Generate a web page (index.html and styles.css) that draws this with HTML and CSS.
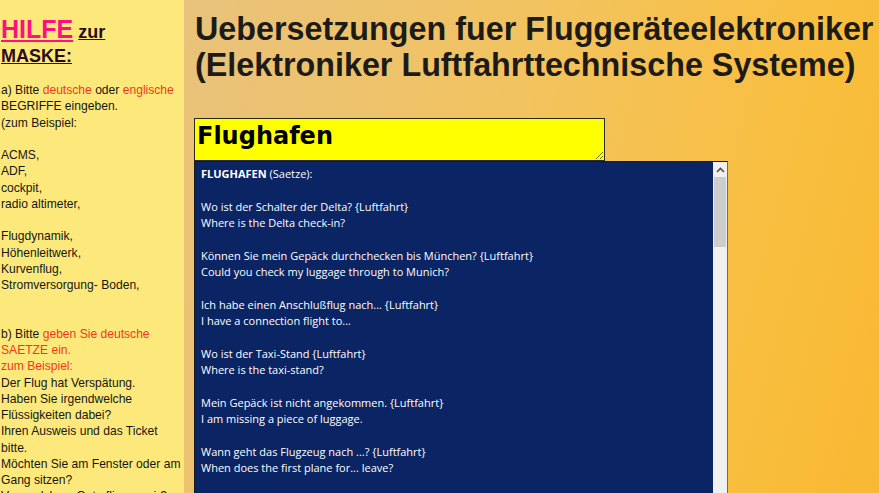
FILE: index.html
```html
<!DOCTYPE html>
<html lang="de">
<head>
<meta charset="utf-8">
<title>Uebersetzungen fuer Fluggeräteelektroniker</title>
<link rel="stylesheet" href="styles.css">
</head>
<body>
<div class="page">
  <aside class="help">
    <div class="help-title"><span class="hilfe">HILFE</span> <span class="zur">zur</span><br><span class="maske">MASKE:</span></div>
    <div class="help-text">a) Bitte <span class="red">deutsche</span> oder <span class="red">englische</span>
BEGRIFFE eingeben.
(zum Beispiel:

ACMS,
ADF,
cockpit,
radio altimeter,

Flugdynamik,
Höhenleitwerk,
Kurvenflug,
Stromversorgung- Boden,


b) Bitte <span class="red">geben Sie deutsche
SAETZE ein.
zum Beispiel:</span>
Der Flug hat Verspätung.
Haben Sie irgendwelche
Flüssigkeiten dabei?
Ihren Ausweis und das Ticket
bitte.
Möchten Sie am Fenster oder am
Gang sitzen?
Von welchem Gate fliegen wir?</div>
  </aside>
  <main class="main">
    <h1 class="title">Uebersetzungen fuer Fluggeräteelektroniker<br>(Elektroniker Luftfahrttechnische Systeme)</h1>
    <textarea class="search" readonly>Flughafen</textarea>
    <div class="result">
      <div class="result-text"><b>FLUGHAFEN</b> (Saetze):

Wo ist der Schalter der Delta? {Luftfahrt}
Where is the Delta check-in?

Können Sie mein Gepäck durchchecken bis München? {Luftfahrt}
Could you check my luggage through to Munich?

Ich habe einen Anschlußflug nach... {Luftfahrt}
I have a connection flight to...

Wo ist der Taxi-Stand {Luftfahrt}
Where is the taxi-stand?

Mein Gepäck ist nicht angekommen. {Luftfahrt}
I am missing a piece of luggage.

Wann geht das Flugzeug nach ...? {Luftfahrt}
When does the first plane for... leave?</div>
      <div class="scrollbar">
        <div class="arrow"><svg width="9" height="6" viewBox="0 0 9 6"><path d="M1 5 L4.5 1.5 L8 5" fill="none" stroke="#505050" stroke-width="1.6"/></svg></div>
        <div class="thumb"></div>
        <div class="track"></div>
      </div>
    </div>
  </main>
</div>
</body>
</html>
```
FILE: styles.css
```css
html, body {
  margin: 0;
  padding: 0;
  height: 100%;
  overflow: hidden;
}
.page {
  display: flex;
  height: 493px;
  width: 879px;
}
.help {
  width: 184px;
  flex: none;
  background: #fde97b;
  font-family: "Liberation Sans", Arial, sans-serif;
  color: #161616;
  overflow: hidden;
}
.help-title {
  padding-top: 19px;
  padding-left: 1px;
  font-weight: bold;
  font-size: 18px;
  line-height: 24px;
}
.hilfe {
  font-size: 25px;
  line-height: 20px;
  color: #ff0f82;
  text-decoration: underline;
}
.zur, .maske {
  font-size: 18px;
  color: #2a0a1e;
  text-decoration: underline;
}
.help-text {
  margin-top: 14px;
  font-size: 12.1px;
  line-height: 16.25px;
  white-space: pre;
  padding-left: 1px;
}
.red {
  color: #ee3a1a;
}
.main {
  flex: 1;
  padding: 11px 0 0 10px;
  background: linear-gradient(105deg, #e9c27c 0%, #f2c35e 45%, #f9be3e 80%, #f8b833 100%);
  display: flex;
  flex-direction: column;
  align-items: flex-start;
  overflow: hidden;
}
.title {
  flex: none;
  margin: 0 0 0 1px;
  font-family: "Liberation Sans", Arial, sans-serif;
  font-size: 32.3px;
  line-height: 36px;
  font-weight: bold;
  color: #1d1b17;
  white-space: nowrap;
}
.search {
  flex: none;
  margin: 35px 0 0 0;
  box-sizing: border-box;
  width: 411px;
  height: 43px;
  border: 1px solid #2a2a1a;
  background: #ffff00;
  font-family: "DejaVu Sans", Verdana, sans-serif;
  font-weight: bold;
  font-size: 24px;
  line-height: 28px;
  padding: 3px 2px;
  color: #000;
  resize: both;
  outline: none;
  overflow: hidden;
}
.result {
  flex: none;
  box-sizing: border-box;
  width: 534px;
  height: 340px;
  border: 1px solid #1a1a1a;
  border-right-color: #6a6a6a;
  background: #0b2463;
  display: flex;
}
.result-text {
  flex: 1;
  padding: 4px 0 0 6px;
  font-family: "Open Sans", "Noto Sans", sans-serif;
  font-size: 11px;
  line-height: 16.33px;
  color: #ffffff;
  white-space: pre;
  overflow: hidden;
}
.scrollbar {
  width: 14px;
  flex: none;
  background: #f0f0f0;
  display: flex;
  flex-direction: column;
}
.arrow {
  height: 15px;
  display: flex;
  align-items: center;
  justify-content: center;
}
.thumb {
  height: 70px;
  margin: 0 1px;
  background: #cdcdcd;
}
.track {
  flex: 1;
}
```
